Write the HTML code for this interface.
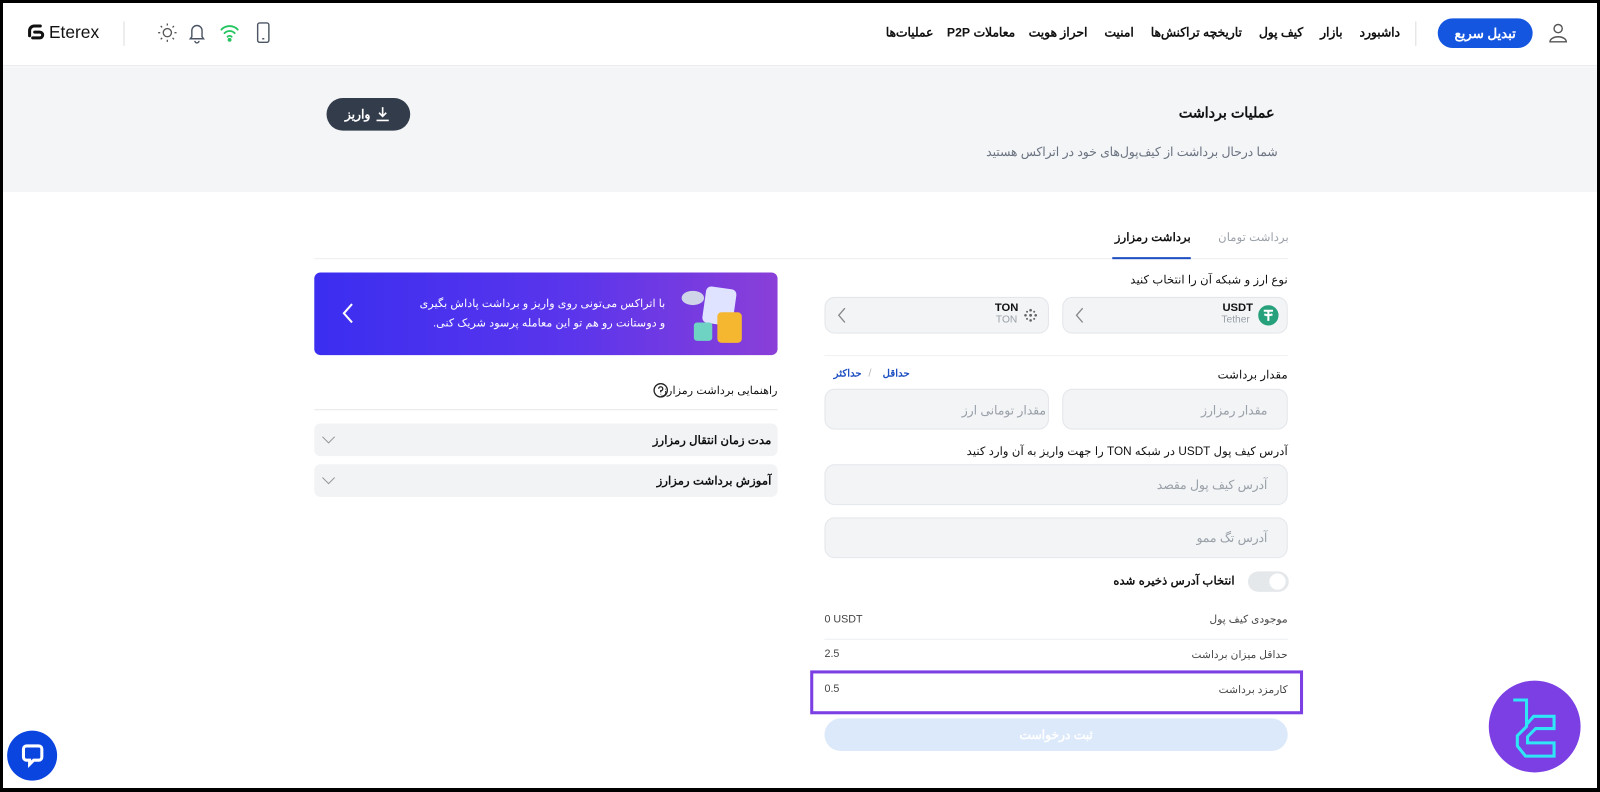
<!DOCTYPE html>
<html><head><meta charset="utf-8"><style>
*{box-sizing:border-box;margin:0;padding:0}
body{width:1600px;height:792px;position:relative;background:#000;font-family:"Liberation Sans","Noto Sans CJK SC",sans-serif;overflow:hidden;color:#1f2937}
#f{position:absolute;left:3px;top:3px;width:1594px;height:785px;background:#fff;overflow:hidden}
#in{position:absolute;left:-3px;top:-3px;width:1565px;height:772px;transform:scale(1.0204);transform-origin:0 0}
.a{position:absolute}
.r{direction:rtl;white-space:nowrap}
.box{position:absolute;background:#f2f4f6;border:1px solid #e3e6ea;border-radius:10px}
.ph{position:absolute;color:#9aa0a8;font-size:12px;direction:rtl;white-space:nowrap}
</style></head><body><div id="f"><div id="in">
<!-- header -->
<div class="a" style="left:0;top:0;width:1565px;height:65px;border-bottom:1px solid #e2e5e9"></div>
<svg class="a" style="left:25px;top:22px" width="20" height="20" viewBox="0 0 20 20"><path d="M4 13 V8 a4.5 4.5 0 0 1 4.5-4.5 h6 M9 9.5 h5 a2.8 2.8 0 0 1 0 5.6 h-7" stroke="#111" stroke-width="3" fill="none" stroke-linecap="round"/></svg>
<div class="a" style="left:48px;top:22px;font-size:17px;color:#111">Eterex</div>
<div class="a" style="left:121px;top:21px;width:1px;height:24px;background:#ddd"></div>
<svg class="a" style="left:154px;top:22px" width="20" height="20" viewBox="0 0 20 20" fill="none" stroke="#555" stroke-width="1.3"><circle cx="10" cy="10" r="4"/><path d="M10 1v2M10 17v2M1 10h2M17 10h2M3.5 3.5l1.4 1.4M15.1 15.1l1.4 1.4M3.5 16.5l1.4-1.4M15.1 4.9l1.4-1.4"/></svg>
<svg class="a" style="left:183px;top:21px" width="20" height="22" viewBox="0 0 20 22" fill="none" stroke="#4b5563" stroke-width="1.4"><path d="M5 15V9a5 5 0 0 1 10 0v6l1.5 2h-13z M8 19a2 2 0 0 0 4 0"/></svg>
<svg class="a" style="left:215px;top:22px" width="20" height="20" viewBox="0 0 20 20" fill="none" stroke="#22c55e" stroke-width="1.8" stroke-linecap="round"><path d="M2 7a11 11 0 0 1 16 0M5 10.5a7 7 0 0 1 10 0M8 14a3 3 0 0 1 4 0"/><circle cx="10" cy="17" r="1" fill="#22c55e"/></svg>
<svg class="a" style="left:251px;top:21px" width="14" height="22" viewBox="0 0 14 22" fill="none" stroke="#4b5563" stroke-width="1.4"><rect x="1.5" y="1.5" width="11" height="19" rx="2"/><path d="M6 17h2"/></svg>
<div class="a r" style="right:193px;top:25px;font-size:12px;font-weight:bold;color:#111">داشبورد&nbsp;&nbsp;&nbsp;&nbsp;&nbsp;بازار&nbsp;&nbsp;&nbsp;&nbsp;&nbsp;کیف پول&nbsp;&nbsp;&nbsp;&nbsp;&nbsp;تاریخچه تراکنش‌ها&nbsp;&nbsp;&nbsp;&nbsp;&nbsp;امنیت&nbsp;&nbsp;&nbsp;&nbsp;&nbsp;احراز هویت&nbsp;&nbsp;&nbsp;&nbsp;معاملات P2P&nbsp;&nbsp;&nbsp;&nbsp;عملیات‌ها</div>
<div class="a" style="left:1387px;top:21px;width:1px;height:24px;background:#ddd"></div>
<div class="a r" style="left:1409px;top:18px;width:93px;height:29px;border-radius:15px;background:#1456e0;color:#fff;font-size:13px;font-weight:bold;text-align:center;line-height:29px">تبدیل سریع</div>
<svg class="a" style="left:1516px;top:21px" width="22" height="22" viewBox="0 0 22 22" fill="none" stroke="#555" stroke-width="1.4"><circle cx="11" cy="7" r="4"/><path d="M3 20a8 5 0 0 1 16 0z"/></svg>
<!-- band -->
<div class="a" style="left:0;top:66px;width:1565px;height:122px;background:#f3f5f7"></div>
<div class="a r" style="right:316px;top:102px;font-size:14px;font-weight:bold;color:#111">عملیات برداشت</div>
<div class="a r" style="right:313px;top:142px;font-size:12px;color:#6b7280">شما درحال برداشت از کیف‌پول‌های خود در اتراکس هستید</div>
<div class="a" style="left:320px;top:96px;width:82px;height:32px;border-radius:16px;background:#333c4b;color:#fff;font-size:12px;font-weight:bold;line-height:32px;padding-left:18px">واریز</div>
<svg class="a" style="left:368px;top:104px" width="14" height="16" viewBox="0 0 14 16" fill="none" stroke="#fff" stroke-width="1.6"><path d="M7 1v9M3.5 6.5L7 10l3.5-3.5M1 14h12"/></svg>
<!-- tabs -->
<div class="a r" style="right:302px;top:225px;font-size:11.5px;color:#9aa0a8">برداشت تومان</div>
<div class="a r" style="right:398px;top:225px;font-size:11.5px;font-weight:bold;color:#111">برداشت رمزارز</div>
<div class="a" style="left:308px;top:253px;width:954px;height:1px;background:#eceef1"></div>
<div class="a" style="left:1090px;top:252px;width:77px;height:2px;background:#1e4fc2"></div>
<!-- right form -->
<div class="a r" style="right:303px;top:267px;font-size:11.5px;color:#111">نوع ارز و شبکه آن را انتخاب کنید</div>
<div class="box" style="left:1041px;top:291px;width:221px;height:36px"></div>
<svg class="a" style="left:1233px;top:299px" width="20" height="20" viewBox="0 0 20 20"><circle cx="10" cy="10" r="10" fill="#26a17b"/><path d="M5.5 5.5h9M10 5.5v10M6 9c2.5 1.2 5.5 1.2 8 0" stroke="#fff" stroke-width="2" fill="none"/></svg>
<div class="a" style="left:1198px;top:296px;font-size:11px;font-weight:bold;color:#111">USDT</div>
<div class="a" style="left:1197px;top:308px;font-size:10px;color:#9aa0a8">Tether</div>
<svg class="a" style="left:1053px;top:301px" width="10" height="16" viewBox="0 0 10 16" fill="none" stroke="#888" stroke-width="1.3"><path d="M8 1L2 8l6 7"/></svg>
<div class="box" style="left:808px;top:291px;width:220px;height:36px"></div>
<svg class="a" style="left:1003px;top:302px" width="14" height="14" viewBox="0 0 14 14" fill="#666"><circle cx="7" cy="2" r="1.3"/><circle cx="7" cy="12" r="1.3"/><circle cx="2" cy="7" r="1.3"/><circle cx="12" cy="7" r="1.3"/><circle cx="3.5" cy="3.5" r="1"/><circle cx="10.5" cy="3.5" r="1"/><circle cx="3.5" cy="10.5" r="1"/><circle cx="10.5" cy="10.5" r="1"/><circle cx="7" cy="7" r="1.4"/></svg>
<div class="a" style="left:975px;top:296px;font-size:11px;font-weight:bold;color:#111">TON</div>
<div class="a" style="left:976px;top:308px;font-size:10px;color:#9aa0a8">TON</div>
<svg class="a" style="left:820px;top:301px" width="10" height="16" viewBox="0 0 10 16" fill="none" stroke="#888" stroke-width="1.3"><path d="M8 1L2 8l6 7"/></svg>
<div class="a" style="left:808px;top:348px;width:454px;height:1px;background:#f0f1f3"></div>
<div class="a r" style="right:303px;top:360px;font-size:11.5px;color:#111">مقدار برداشت</div>
<div class="a r" style="left:865px;top:361px;font-size:10px;font-weight:bold;color:#1e4fc2">حداقل</div>
<div class="a" style="left:851px;top:360px;font-size:11px;color:#bbb">/</div>
<div class="a r" style="left:817px;top:361px;font-size:10px;font-weight:bold;color:#1e4fc2">حداکثر</div>
<div class="box" style="left:1041px;top:381px;width:221px;height:40px"></div>
<div class="ph" style="right:323px;top:395px">مقدار رمزارز</div>
<div class="box" style="left:808px;top:381px;width:220px;height:40px"></div>
<div class="ph" style="right:540px;top:395px">مقدار تومانی ارز</div>
<div class="a r" style="right:303px;top:435px;font-size:11.5px;color:#111">آدرس کیف پول USDT در شبکه TON را جهت واریز به آن وارد کنید</div>
<div class="box" style="left:808px;top:455px;width:454px;height:40px"></div>
<div class="ph" style="right:323px;top:468px">آدرس کیف پول مقصد</div>
<div class="box" style="left:808px;top:507px;width:454px;height:40px"></div>
<div class="ph" style="right:323px;top:520px">آدرس تگ ممو</div>
<div class="a" style="left:1223px;top:560px;width:40px;height:20px;border-radius:10px;background:#e5e8eb"></div>
<div class="a" style="left:1244px;top:562px;width:16px;height:16px;border-radius:50%;background:#fff"></div>
<div class="a r" style="right:355px;top:562px;font-size:11.5px;font-weight:bold;color:#111">انتخاب آدرس ذخیره شده</div>
<div class="a r" style="right:303px;top:601px;font-size:10.5px;color:#444">موجودی کیف پول</div>
<div class="a" style="left:808px;top:601px;font-size:10.5px;color:#444">0 USDT</div>
<div class="a" style="left:808px;top:626px;width:454px;height:1px;background:#eceef1"></div>
<div class="a r" style="right:303px;top:636px;font-size:10.5px;color:#444">حداقل میزان برداشت</div>
<div class="a" style="left:808px;top:635px;font-size:10.5px;color:#444">2.5</div>
<div class="a" style="left:794px;top:657px;width:483px;height:43px;border:3px solid #7b3fe4"></div>
<div class="a r" style="right:303px;top:670px;font-size:10.5px;color:#444">کارمزد برداشت</div>
<div class="a" style="left:808px;top:669px;font-size:10.5px;color:#444">0.5</div>
<div class="a r" style="left:808px;top:704px;width:454px;height:32px;border-radius:16px;background:#dce9fb;color:#fff;font-size:12px;font-weight:bold;text-align:center;line-height:32px">ثبت درخواست</div>
<!-- left column -->
<div class="a" style="left:308px;top:267px;width:454px;height:81px;border-radius:6px;background:linear-gradient(90deg,#3b2ef0,#5a35ec 55%,#8a3fd8)"></div>
<svg class="a" style="left:335px;top:296px" width="12" height="22" viewBox="0 0 12 22" fill="none" stroke="#fff" stroke-width="2"><path d="M10 2L2 11l8 9"/></svg>
<div class="a r" style="right:913px;top:289px;font-size:11px;color:#fff;line-height:19px">با اتراکس می‌تونی روی واریز و برداشت پاداش بگیری<br>و دوستانت رو هم تو این معامله پرسود شریک کنی.</div>
<div class="a" style="left:690px;top:282px;width:30px;height:36px;border-radius:5px;background:#dfe3ff;transform:rotate(8deg)"></div>
<div class="a" style="left:668px;top:285px;width:22px;height:14px;border-radius:50%;background:#cfd4e8"></div>
<div class="a" style="left:703px;top:306px;width:24px;height:30px;border-radius:4px;background:#f5b630"></div>
<div class="a" style="left:680px;top:316px;width:18px;height:18px;border-radius:3px;background:#6fd3c4"></div>
<div class="a r" style="right:803px;top:376px;font-size:11px;color:#111">راهنمایی برداشت رمزارز</div>
<svg class="a" style="left:640px;top:375px" width="15" height="15" viewBox="0 0 15 15" fill="none" stroke="#222" stroke-width="1.3"><circle cx="7.5" cy="7.5" r="6.5"/><path d="M5.5 6a2 2 0 1 1 2 2v1.5M7.5 11v.5"/></svg>
<div class="a" style="left:308px;top:401px;width:454px;height:1px;background:#e6e8eb"></div>
<div class="a" style="left:308px;top:415px;width:454px;height:32px;border-radius:6px;background:#f2f3f5"></div>
<div class="a r" style="right:809px;top:424px;font-size:11.5px;font-weight:bold;color:#111">مدت زمان انتقال رمزارز</div>
<svg class="a" style="left:315px;top:427px" width="14" height="8" viewBox="0 0 14 8" fill="none" stroke="#999" stroke-width="1"><path d="M1 1l6 6 6-6"/></svg>
<div class="a" style="left:308px;top:455px;width:454px;height:32px;border-radius:6px;background:#f2f3f5"></div>
<div class="a r" style="right:809px;top:464px;font-size:11.5px;font-weight:bold;color:#111">آموزش برداشت رمزارز</div>
<svg class="a" style="left:315px;top:467px" width="14" height="8" viewBox="0 0 14 8" fill="none" stroke="#999" stroke-width="1"><path d="M1 1l6 6 6-6"/></svg>
<!-- chat -->
<div class="a" style="left:7px;top:716px;width:49px;height:49px;border-radius:50%;background:#0b45e0"></div>
<svg class="a" style="left:21px;top:729px" width="22" height="24" viewBox="0 0 22 24" fill="none" stroke="#fff" stroke-width="3"><path d="M5 2h12a3 3 0 0 1 3 3v8a3 3 0 0 1-3 3h-5l-4 4v-4H5a3 3 0 0 1-3-3V5a3 3 0 0 1 3-3z"/></svg>
<!-- logo -->
<div class="a" style="left:1459px;top:667px;width:90px;height:90px;border-radius:50%;background:#7b3fe4"></div>
<svg class="a" style="left:1479px;top:684px" width="50" height="60" viewBox="0 0 50 60" fill="none" stroke="#2ee6f5" stroke-width="3"><path d="M4 2h13v26l-9 9v10l8 10h28V44H18V38l8-8h18V18H24L17 26"/></svg>
</div></div></body></html>
